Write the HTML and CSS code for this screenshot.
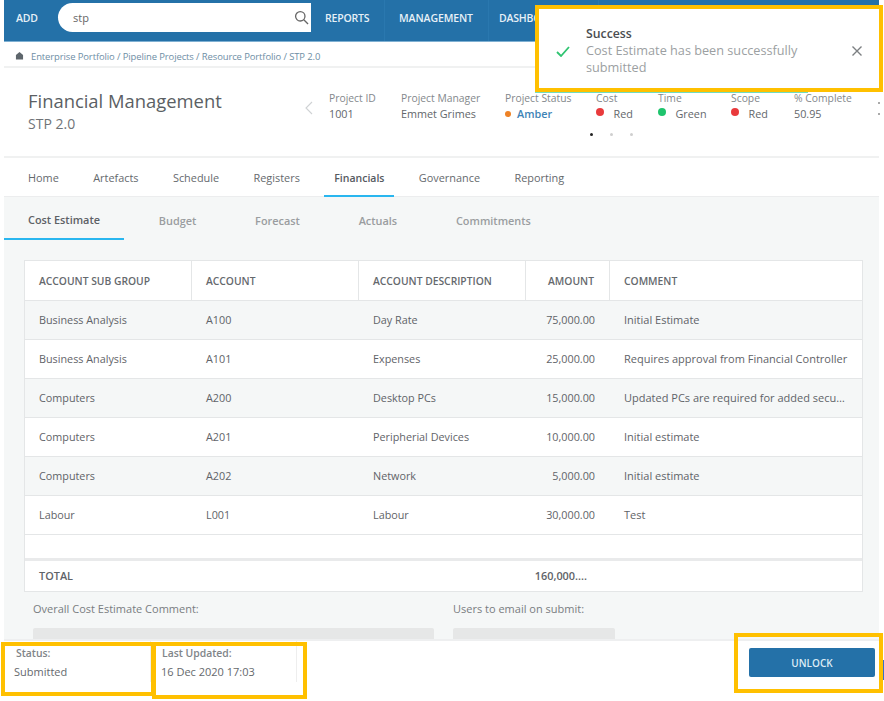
FILE: index.html
```html
<!DOCTYPE html>
<html lang="en">
<head>
<meta charset="utf-8">
<title>Financial Management</title>
<link rel="stylesheet" href="styles.css">
</head>
<body>
<div class="page">
  <header class="topbar">
    <span class="nav-item add">ADD</span>
    <div class="search"><span>stp</span>
      <svg class="search-icon" viewBox="0 0 16 16"><circle cx="6.7" cy="6.7" r="5" /><path d="M10.4 10.4L15 15"/></svg>
    </div>
    <span class="nav-item reports">REPORTS</span>
    <span class="nav-item manage">MANAGEMENT</span>
    <span class="nav-item dash">DASHBOARDS</span>
  </header>
  <nav class="crumbs">
    <svg class="home" viewBox="0 0 10 9"><path d="M5 0L9 3.5V8.5H1V3.5Z"/></svg>
    <span>Enterprise Portfolio / Pipeline Projects / Resource Portfolio / STP 2.0</span>
  </nav>
  <section class="summary">
    <div class="title-block">
      <h1>Financial Management</h1>
      <p>STP 2.0</p>
    </div>
    <svg class="chev" viewBox="0 0 8 14"><path d="M7 1L1 7l6 6"/></svg>
    <div class="facts">
      <div class="fact f-id"><span class="lab">Project ID</span><span class="val">1001</span></div>
      <div class="fact f-pm"><span class="lab">Project Manager</span><span class="val">Emmet Grimes</span></div>
      <div class="fact f-st"><span class="lab">Project Status</span><span class="val"><i class="dot small amber"></i><b class="link">Amber</b></span></div>
      <div class="fact f-co"><span class="lab">Cost</span><span class="val"><i class="dot red"></i>Red</span></div>
      <div class="fact f-ti"><span class="lab">Time</span><span class="val"><i class="dot green"></i>Green</span></div>
      <div class="fact f-sc"><span class="lab">Scope</span><span class="val"><i class="dot red"></i>Red</span></div>
      <div class="fact f-pc"><span class="lab">% Complete</span><span class="val">50.95</span></div>
    </div>
    <div class="pager"><i class="on"></i><i></i><i></i></div>
    <div class="more"><i></i><i></i></div>
  </section>
  <nav class="tabs">
    <span>Home</span><span>Artefacts</span><span>Schedule</span><span>Registers</span><span class="active">Financials</span><span>Governance</span><span>Reporting</span>
  </nav>
  <main class="content">
    <nav class="subtabs">
      <span class="active">Cost Estimate</span><span>Budget</span><span>Forecast</span><span>Actuals</span><span>Commitments</span>
    </nav>
    <div class="grid">
      <div class="row head">
        <div>ACCOUNT SUB GROUP</div><div>ACCOUNT</div><div>ACCOUNT DESCRIPTION</div><div class="num">AMOUNT</div><div>COMMENT</div>
      </div>
      <div class="row alt"><div>Business Analysis</div><div>A100</div><div>Day Rate</div><div class="num">75,000.00</div><div>Initial Estimate</div></div>
      <div class="row"><div>Business Analysis</div><div>A101</div><div>Expenses</div><div class="num">25,000.00</div><div>Requires approval from Financial Controller</div></div>
      <div class="row alt"><div>Computers</div><div>A200</div><div>Desktop PCs</div><div class="num">15,000.00</div><div>Updated PCs are required for added security</div></div>
      <div class="row"><div>Computers</div><div>A201</div><div>Peripherial Devices</div><div class="num">10,000.00</div><div>Initial estimate</div></div>
      <div class="row alt"><div>Computers</div><div>A202</div><div>Network</div><div class="num">5,000.00</div><div>Initial estimate</div></div>
      <div class="row"><div>Labour</div><div>L001</div><div>Labour</div><div class="num">30,000.00</div><div>Test</div></div>
      <div class="row empty"></div>
      <div class="row total"><div>TOTAL</div><div></div><div></div><div class="num">160,000....</div><div></div></div>
    </div>
    <div class="fields">
      <div class="field f-comment"><label>Overall Cost Estimate Comment:</label><div class="box"></div></div>
      <div class="field f-users"><label>Users to email on submit:</label><div class="box"></div></div>
    </div>
  </main>
  <footer class="footer">
    <div class="meta m-status"><span class="lab">Status:</span><span class="val">Submitted</span></div>
    <div class="meta m-updated"><span class="lab">Last Updated:</span><span class="val">16 Dec 2020 17:03</span></div>
    <button class="unlock">UNLOCK</button>
  </footer>
</div>
<div class="toast">
  <svg class="tick" viewBox="0 0 14 11"><path d="M1 6l4 4 8-9"/></svg>
  <div class="toast-text"><strong>Success</strong><span>Cost Estimate has been successfully submitted</span></div>
  <svg class="close" viewBox="0 0 12 12"><path d="M1.5 1.5l9 9M10.5 1.5l-9 9"/></svg>
</div>
<div class="hl hl-status"></div>
<div class="hl hl-updated"></div>
<div class="hl hl-unlock"></div>
<div class="stub"></div>
</body>
</html>
```
FILE: styles.css
```css
* { box-sizing: border-box; }
html, body { margin: 0; height: 100%; background: #fff; overflow: hidden; }
body { font-family: "Open Sans", "Noto Sans", sans-serif; color: #5d6268; font-size: 11px; position: relative; }
.page { margin-left: 4px; width: 875px; height: 701px; display: flex; flex-direction: column; }

.topbar { height: 42px; background: #2471a8; border-bottom: 1px solid #7fb0d2; display: flex; align-items: stretch; padding-left: 12px; color: #e6f0f7; flex: none; overflow: hidden; }
.nav-item { display: flex; align-items: center; padding-bottom: 5px; font-size: 10.5px; font-weight: 600; letter-spacing: -0.2px; white-space: nowrap; border-right: 1px solid #2a78af; }
.add { width: 42px; border-right: 0; }
.search { width: 253px; height: 29px; margin-top: 3px; background: #fff; border-radius: 15px 0 0 15px; display: flex; align-items: center; justify-content: space-between; padding: 0 2px 0 15px; color: #666; font-size: 11px; flex: none; }
.search-icon { width: 15px; height: 15px; fill: none; stroke: #666; stroke-width: 1.4; }
.reports { margin-left: 14px; width: 60px; }
.manage { padding-left: 14px; width: 104px; letter-spacing: -0.1px; }
.dash { padding-left: 10px; width: 110px; }

.crumbs { height: 26px; flex: none; display: flex; align-items: center; gap: 7px; padding: 4px 0 0 11px; border-bottom: 2px solid #f0f1f1; color: #6e8ea5; font-size: 9.45px; letter-spacing: -0.1px; }
.home { width: 9px; height: 8px; fill: #5e666c; }

.summary { height: 88px; flex: none; position: relative; display: flex; align-items: flex-start; }
.title-block { width: 280px; padding: 20px 0 0 24px; }
h1 { margin: 0; font-size: 18.4px; font-weight: 400; line-height: 26px; color: #5b5f64; }
.title-block p { margin: 0; font-size: 14px; line-height: 19px; color: #6f7377; }
.chev { width: 8px; height: 14px; margin: 33px 0 0 21px; fill: none; stroke: #cfd2d4; stroke-width: 1.1; flex: none; }
.facts { display: flex; padding-top: 23px; margin-left: 16px; }
.fact { display: flex; flex-direction: column; white-space: nowrap; }
.lab { font-size: 10.35px; line-height: 15px; color: #84888c; }
.val { font-size: 10.8px; line-height: 15px; color: #63676b; }
.f-id { width: 72px; }
.f-pm { width: 104px; }
.f-st { width: 91px; }
.f-co { width: 62px; }
.f-ti { width: 73px; }
.f-sc { width: 63px; }
.dot { display: inline-block; width: 8px; height: 8px; border-radius: 50%; margin-right: 9.5px; position: relative; top: -2px; }
.dot.small { width: 6px; height: 6px; margin-right: 6px; top: -1px; }
.red { background: #e93a3c; }
.green { background: #1fc46d; }
.amber { background: #ee8226; }
.link { color: #3d83b6; font-weight: 600; }
.pager { position: absolute; left: 586px; top: 65px; display: flex; gap: 17px; }
.pager i { width: 3px; height: 3px; border-radius: 50%; background: #cfcfcf; }
.pager i.on { background: #222; }
.more { position: absolute; right: -1px; top: 34px; display: flex; flex-direction: column; gap: 9px; }
.more i { width: 2px; height: 2px; background: #aaa; }

.tabs { height: 41px; flex: none; display: flex; align-items: stretch; border-top: 2px solid #f0f1f1; padding-left: 14px; border-bottom: 1px solid #ecedee; }
.tabs span { display: flex; align-items: center; padding: 3px 10px 0; margin-right: 14.4px; font-size: 10.9px; color: #65696d; border-bottom: 2px solid transparent; }
.tabs span.active { font-weight: 600; font-size: 10.5px; color: #565a5f; border-bottom: 2px solid #29b6ef; margin-bottom: -1px; }

.content { flex: 1; min-height: 0; background: #f5f7f7; padding: 0 16px 0 20px; overflow: hidden; }
.subtabs { height: 43px; margin-left: -20px; display: flex; gap: 10.8px; }
.subtabs span { display: flex; align-items: center; padding: 4px 24px 0; font-size: 10.9px; font-weight: 600; color: #9a9da0; }
.subtabs span.active { color: #5d6166; border-bottom: 2px solid #29b6ef; }

.grid { margin-top: 20px; width: 839px; background: #fff; border: 1px solid #e4e6e7; }
.row { display: grid; grid-template-columns: 167px 167px 167px 84px 1fr; height: 39px; border-bottom: 1px solid #e4e6e7; font-size: 10.8px; color: #5f6368; }
.row > div { display: flex; align-items: center; padding: 0 14px 1px; white-space: nowrap; overflow: hidden; min-width: 0; }
.row > div.num { justify-content: flex-end; padding: 0 15px 1px 0; }
.row > div:last-child { display: block; line-height: 37px; text-overflow: ellipsis; font-size: 11px; padding: 0 14px; }
.row.head { height: 40px; font-size: 10.3px; font-weight: 600; color: #65696d; }
.row.head > div { border-right: 1px solid #e4e6e7; padding-bottom: 0; }
.row.head > div:last-child { border-right: 0; line-height: 40px; font-size: 10.3px; }
.row.alt { background: #f5f7f7; }
.row.empty { height: 26px; display: block; border-bottom: 3px solid #e9eaeb; }
.row.total { height: 30px; border-bottom: 0; font-weight: 600; font-size: 10.9px; }
.row.total > div { padding-bottom: 2px; }
.row.total > div:last-child { line-height: 28px; }
.row.total > div.num { font-weight: 600; padding: 0 23px 2px 0; }

.fields { display: flex; margin-top: 9px; margin-left: 9px; }
.field label { display: block; font-size: 11px; line-height: 15px; color: #797d81; }
.box { margin-top: 12px; height: 40px; background: #e6e7e7; border-radius: 2px; }
.f-comment { width: 401px; }
.f-users { width: 162px; margin-left: 19px; }

.footer { position: absolute; left: 4px; right: 5px; top: 639px; height: 62px; background: #fff; border-top: 2px solid #eeeff0; }
.meta { position: absolute; top: 0; display: flex; flex-direction: column; height: 41px; padding-top: 5px; }
.m-status { left: 10px; width: 137px; border-right: 1px solid #eee; }
.m-updated { left: 157px; width: 136px; border-right: 1px solid #eee; }
.meta .lab { font-size: 10.4px; line-height: 14px; padding-left: 2px; color: #808488; font-weight: 600; }
.m-updated .lab { padding-left: 1px; }
.meta .val { font-size: 11px; line-height: 16px; margin-top: 4px; color: #65696d; }
.unlock { position: absolute; left: 745px; top: 7px; width: 126px; height: 29px; padding-top: 2px; background: #2471a8; color: #dcebf5; border: 0; border-radius: 2px; font: 600 10px "Open Sans", sans-serif; }

.toast { position: absolute; left: 535px; top: 5px; width: 348px; height: 87px; background: #fff; display: flex; align-items: flex-start; border: 4px solid #ffc000; }
.toast::after { content: ""; position: absolute; left: -4px; bottom: -5px; width: 273px; height: 1px; background: #6fdcc0; }
.tick { width: 14px; height: 11px; margin: 37px 0 0 17px; fill: none; stroke: #2fc471; stroke-width: 1.8; flex: none; }
.toast-text { width: 240px; margin: 16px 0 0 16px; display: flex; flex-direction: column; flex: none; }
.toast-text strong { font-size: 12.3px; line-height: 17px; font-weight: 600; color: #4a4d50; }
.toast-text span { font-size: 12.7px; line-height: 17px; color: #9c9fa2; }
.close { width: 12px; height: 12px; margin: 36px 0 0 25px; fill: none; stroke: #7c7f82; stroke-width: 1.4; flex: none; }

.hl { position: absolute; border: 4px solid #ffc000; pointer-events: none; }
.hl-status { left: 1px; top: 642px; width: 154px; height: 54px; }
.hl-updated { left: 152px; top: 642px; width: 155px; height: 57px; }
.hl-unlock { left: 734px; top: 633px; width: 149px; height: 60px; }
.stub { position: absolute; left: 883px; top: 660px; width: 1px; height: 20px; background: #3a6fc4; }
```
